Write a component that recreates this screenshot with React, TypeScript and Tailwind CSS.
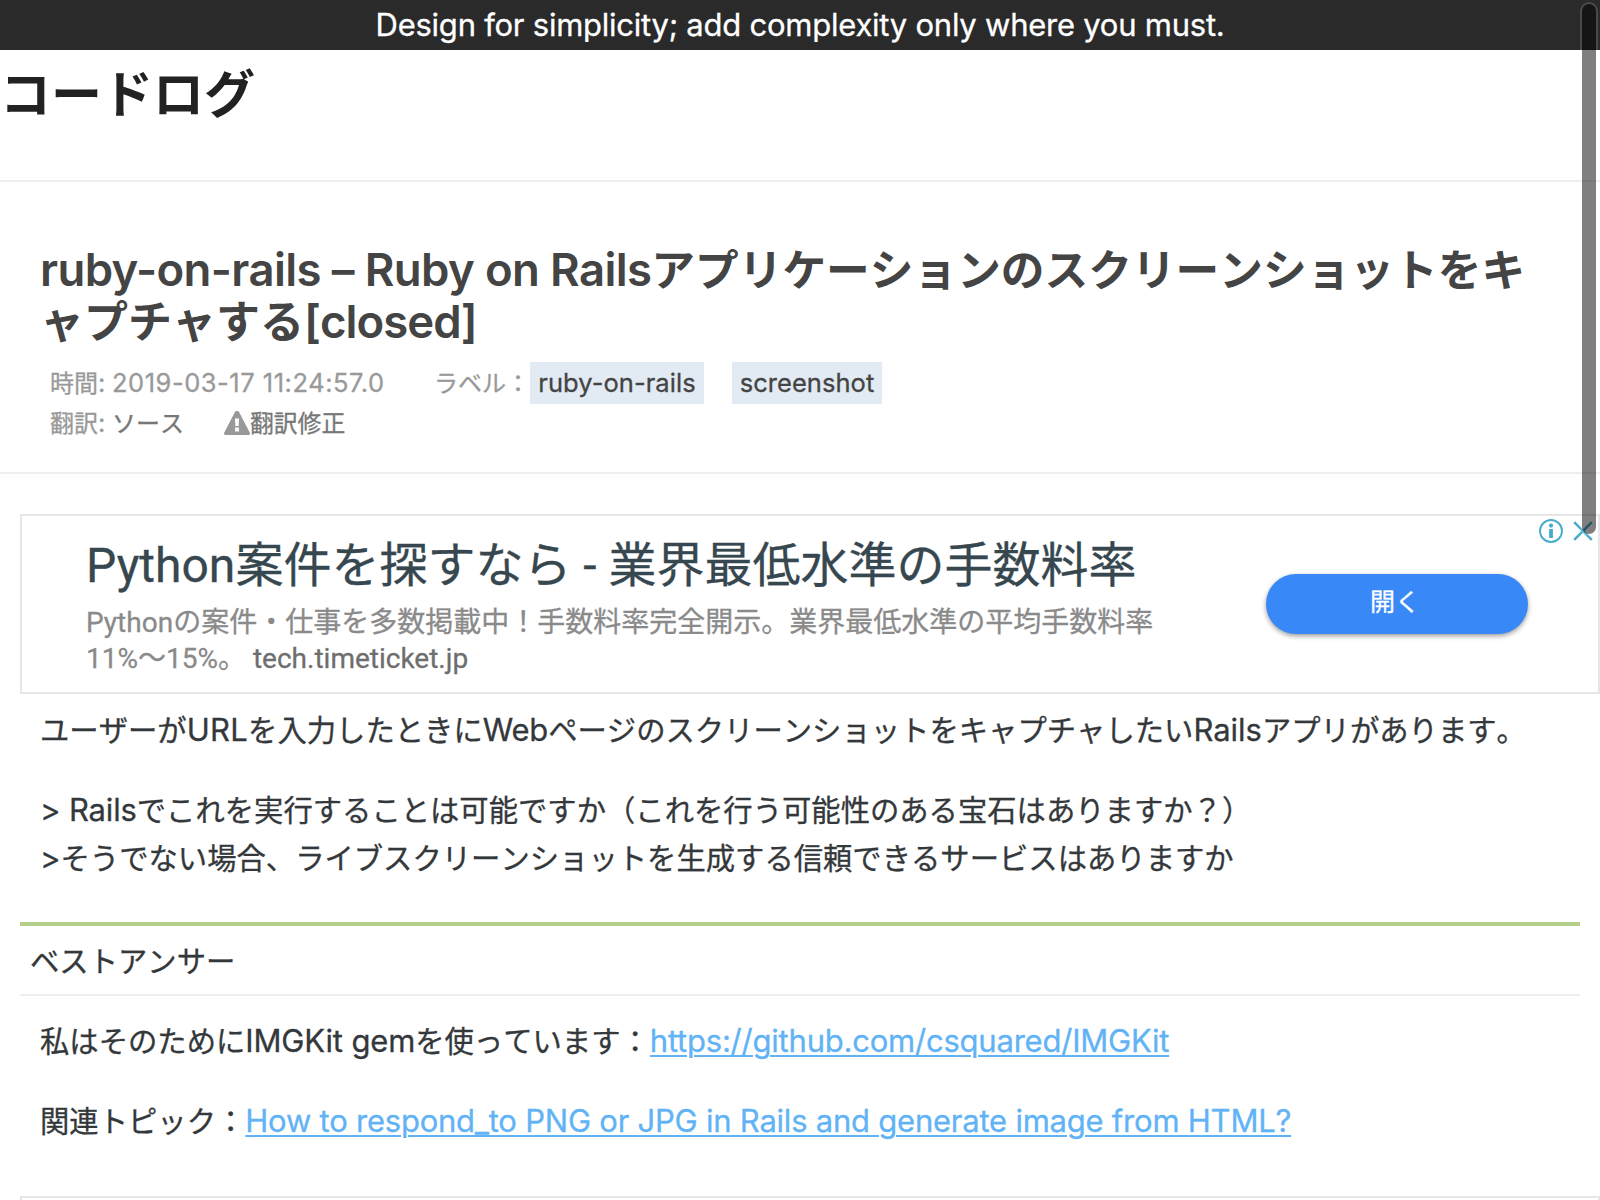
import type { ReactNode } from 'react'

/** Inline Japanese run, sized relative to the surrounding Latin text. */
function J({ children, className = 'text-[29.33px]' }: { children: ReactNode; className?: string }) {
  return (
    <span className={`font-['Noto_Sans_CJK_JP',sans-serif] leading-none tracking-normal [font-kerning:none] ${className}`}>
      {children}
    </span>
  )
}

function Tag({ children, className }: { children: ReactNode; className: string }) {
  return (
    <a className={`flex h-[42px] items-center justify-center bg-[#e2ebf3] text-[25.5px] tracking-[0.05px] text-[#444] ${className}`}>
      {children}
    </a>
  )
}

function Warning() {
  return (
    <svg viewBox="0 0 26 24" className="-mt-px h-6 w-[26px] shrink-0">
      <path d="M13 0C14 0 14.8.5 15.3 1.4L25.6 21.2C26.4 22.7 25.7 24 24 24H2C.3 24-.4 22.7.4 21.2L10.7 1.4C11.2.5 12 0 13 0Z" fill="#999" />
      <path d="M10.9 7.5H15.1L14.6 15H11.4ZM11.1 16.4H14.9V20.5H11.1Z" fill="#fff" />
    </svg>
  )
}

function AdChoices() {
  return (
    <div className="absolute top-[3px] right-[5px] flex items-center gap-[10px] text-[#47accb]">
      <svg viewBox="0 0 24 24" className="size-6" fill="none" stroke="currentColor">
        <circle cx="12" cy="12" r="11" strokeWidth="1.9" />
        <circle cx="12" cy="6.6" r="2.1" fill="currentColor" stroke="none" />
        <path d="M12 10V19" strokeWidth="3.8" />
      </svg>
      <svg viewBox="0 0 20 20" className="size-5" fill="none" stroke="currentColor" strokeWidth="2.5">
        <path d="M1.2 1.2L18.8 18.8M18.8 1.2L1.2 18.8" />
      </svg>
    </div>
  )
}

export default function App() {
  return (
    <div className="relative h-[1200px] w-[1600px] overflow-hidden bg-white font-['Inter','Noto_Sans_CJK_JP',sans-serif] text-[31px] whitespace-nowrap text-[#34383b] [-webkit-text-stroke-width:0.3px]">
      <div className="flex h-[50px] items-center justify-center bg-[#2a2a2a] tracking-[-0.24px] text-white">
        Design for simplicity; add complexity only where you must.
      </div>

      <header className="h-[132px] border-b-2 border-[#eee] pt-[15px] text-[#222] [-webkit-text-stroke-width:0px]">
        <div className="flex h-[52px] items-center font-bold">
          <J className="text-[51px]">コードログ</J>
        </div>
      </header>

      <section className="h-[292px] border-b-2 border-[#eee] px-10 pt-[62px]">
        <h1 className="text-[45.5px] leading-[52px] font-semibold tracking-[-0.62px] text-[#444] [-webkit-text-stroke-width:0px]">
          ruby-on-rails – Ruby on Rails<J className="text-[43.7px]">アプリケーションのスクリーンショットをキ</J>
          <br />
          <span className="tracking-[-0.95px]"><J className="text-[44px]">ャプチャする</J>[closed]</span>
        </h1>
        <div className="mt-[14px] flex h-[42px] items-center pl-[10px] text-[25.5px] text-[#999]">
          <span className="w-[62px]"><J className="text-[24px]">時間</J>:</span>
          <span className="w-[322px] tracking-[0.52px]">2019-03-17 11:24:57.0</span>
          <span className="w-24"><J className="text-[24px]">ラベル：</J></span>
          <Tag className="w-[174px]">ruby-on-rails</Tag>
          <Tag className="ml-7 w-[150px]">screenshot</Tag>
        </div>
        <div className="flex h-[38px] items-center pl-[10px] text-[25.5px] text-[#999]">
          <span className="w-[62px]"><J className="text-[24px]">翻訳</J>:</span>
          <a className="w-[112px] text-[#777]"><J className="text-[24px]">ソース</J></a>
          <Warning />
          <a className="text-[#777]"><J className="text-[23.8px]">翻訳修正</J></a>
        </div>
      </section>

      <main className="pt-10 pl-5">
        <aside className="relative flex h-[180px] border-2 border-[#e6e6e6] pt-5 pl-16 font-['Roboto','Noto_Sans_CJK_JP',sans-serif]">
          <div className="w-[1180px]">
            <div className="text-[48px] leading-[60px] text-[#37474f]">
              Python<J className="text-[48px]">案件を探すなら</J> - <J className="text-[48px]">業界最低水準の手数料率</J>
            </div>
            <div className="mt-[9px] text-[28px] leading-9 text-[#8a8a8a]">
              Python<J className="text-[28px]">の案件・仕事を多数掲載中！手数料率完全開示。業界最低水準の平均手数料率</J>
              <br />
              11%<J className="text-[28px]">〜</J>15%<J className="text-[28px]">。</J> <span className="text-[#6e6e6e]">tech.timeticket.jp</span>
            </div>
          </div>
          <button className="mt-[38px] flex h-[60px] w-[262px] justify-center rounded-full bg-[#3888f8] pt-[14px] pr-[4px] text-white shadow-[0_2px_5px_rgba(0,0,0,0.4)]">
            <J className="text-[25px]">開く</J>
          </button>
          <AdChoices />
        </aside>

        <div className="pt-[12px] pl-5 leading-[48px]">
          <p>
            <J>ユーザーが</J><span className="tracking-[0.3px]">URL</span><J>を入力したときに</J><span className="tracking-[-0.2px]">Web</span><J>ページのスクリーンショットをキャプチャしたい</J>Rails<J>アプリがあります。</J>
          </p>
          <p className="mt-8">
            <span className="tracking-[-0.15px]">&gt; Rails</span><J>でこれを実行することは可能ですか（これを行う可能性のある宝石はありますか？）</J>
            <br />
            &gt;<J>そうでない場合、ライブスクリーンショットを生成する信頼できるサービスはありますか</J>
          </p>
        </div>

        <section className="mt-10 mr-5 border-t-4 border-[#b5d08a]">
          <div className="flex h-[70px] items-center border-b-2 border-[#eee] pb-px pl-[10px]">
            <J>ベストアンサー</J>
          </div>
          <div className="pt-[21px] pl-5 leading-[48px]">
            <p>
              <J>私はそのために</J><span className="tracking-[-0.15px]">IMGKit gem</span><J>を使っています：</J>
              <a className="tracking-[-0.22px] text-[#62b3f5] underline decoration-2 underline-offset-[3px]">https://github.com/csquared/IMGKit</a>
            </p>
            <p className="mt-8">
              <J>関連トピック：</J>
              <a className="tracking-[-0.23px] text-[#62b3f5] underline decoration-2 underline-offset-[3px]">How to respond_to PNG or JPG in Rails and generate image from HTML?</a>
            </p>
          </div>
        </section>

        <aside className="mt-[51px] h-[180px] border-2 border-[#e6e6e6]" />
      </main>

      <div className="absolute top-[2px] right-[2px] h-[534px] w-[18px] rounded-full border-2 border-white/15 bg-black/50 bg-clip-padding" />
    </div>
  )
}
